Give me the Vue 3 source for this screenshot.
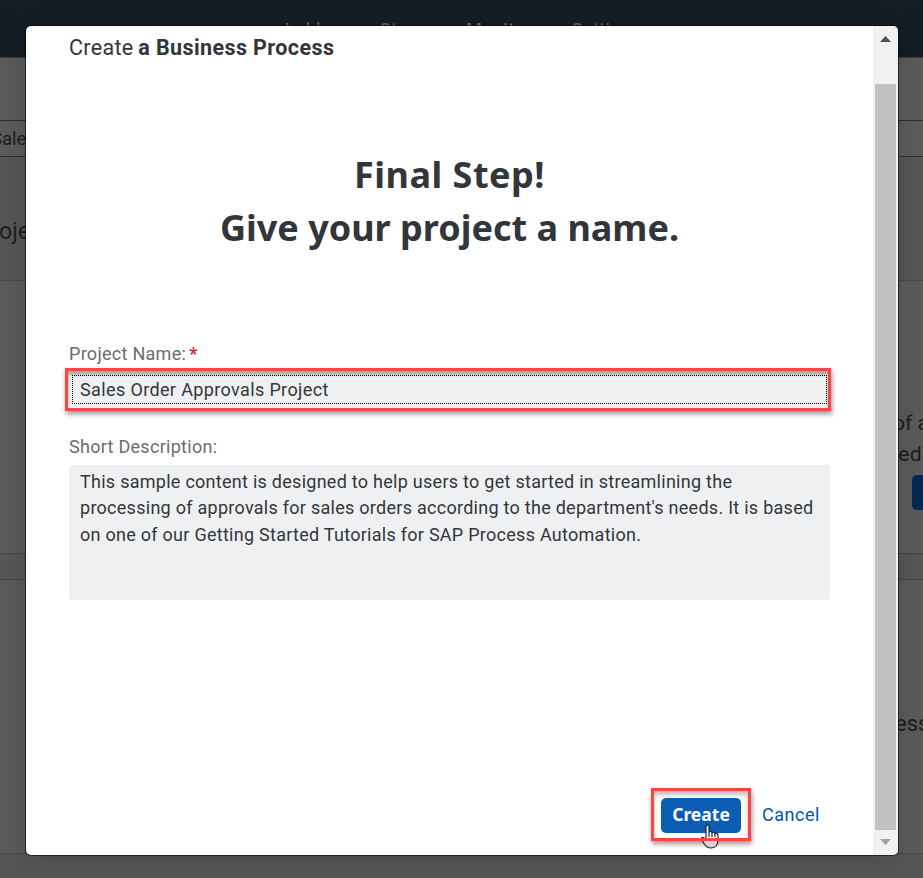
<script setup>
import { ref } from 'vue'

const navItems = [
  { label: 'Lobby', active: false },
  { label: 'Store', active: false },
  { label: 'Monitor', active: true },
  { label: 'Settings', active: false },
]
const projectName = ref('Sales Order Approvals Project')
const descriptionLines = [
  'This sample content is designed to help users to get started in streamlining the',
  "processing of approvals for sales orders according to the department's needs. It is based",
  'on one of our Getting Started Tutorials for SAP Process Automation.',
]
</script>

<template>
  <div class="screen">
    <div class="backdrop">
      <header class="topbar">
        <nav class="nav">
          <span v-for="item in navItems" :key="item.label" :class="{ active: item.active }">{{ item.label }}</span>
        </nav>
      </header>
      <section class="toolbar"></section>
      <section class="search"><span class="search-text">Sales</span></section>
      <section class="title-row"><span class="title-text">Projects</span></section>
      <section class="card card-top">
        <div class="card-body">
          <span>of a</span>
          <span class="second">ted</span>
          <span class="blue-button"></span>
        </div>
      </section>
      <section class="card card-bottom"><span class="ess">ess</span></section>
    </div>

    <main class="dialog">
      <div class="content">
        <h1 class="dialog-title">Create <b>a Business Process</b></h1>
        <h2 class="headline">
          <span class="h-first">Final Step!</span>
          <span class="h-second">Give your project a name.</span>
        </h2>
        <label class="label name-label">Project Name:<span class="star">*</span></label>
        <div class="input-frame">
          <div class="input"><span>{{ projectName }}</span></div>
        </div>
        <label class="label desc-label">Short Description:</label>
        <div class="textarea">
          <span v-for="(line, i) in descriptionLines" :key="i">{{ line }}</span>
        </div>
        <footer class="actions">
          <div class="create-frame">
            <button class="create">Create</button>
            <svg class="pointer" width="20" height="26" viewBox="0 0 20 26">
              <path d="M6 15V2.6C6 .5 9 .5 9 2.6V8.2C9.3 6.8 12 7.2 12 9C12.5 7.6 15 8.1 15 10C15.6 8.8 18 9.3 18 11.2V16C18 21 15 24 10.8 24C7 24 5.4 22 3.8 19.3L1.5 15.3C.7 13.8 2.8 12.7 4 14Z" fill="#fff" />
              <path d="M1.5 16H18C18 21 15 24 10.8 24C7 24 5.4 22 3.8 19.3Z" fill="#d4d4d4" />
              <path d="M6 15V2.6C6 .5 9 .5 9 2.6V8.2C9.3 6.8 12 7.2 12 9C12.5 7.6 15 8.1 15 10C15.6 8.8 18 9.3 18 11.2V16C18 21 15 24 10.8 24C7 24 5.4 22 3.8 19.3L1.5 15.3C.7 13.8 2.8 12.7 4 14Z" fill="none" stroke="#20242c" stroke-width="1.2" />
              <path d="M9 8v5M12 9v4M15 10v3" fill="none" stroke="#20242c" stroke-width="1.2" />
              <path d="M0 14H20V17H0Z" fill="#fc4444" />
            </svg>
          </div>
          <button class="cancel">Cancel</button>
        </footer>
      </div>
      <aside class="scrollbar">
        <svg class="arrow" width="11" height="6" viewBox="0 0 11 6"><path d="M0 6L5.5 0L11 6Z" fill="#505050" /></svg>
        <div class="thumb"></div>
        <svg class="arrow" width="11" height="6" viewBox="0 0 11 6"><path d="M0 0L5.5 6L11 0Z" fill="#a3a3a3" /></svg>
      </aside>
    </main>
  </div>
</template>

<style>
body { margin: 0; overflow: hidden; }
</style>

<style scoped>
* { box-sizing: border-box; }
.screen {
  position: relative;
  width: 923px;
  height: 878px;
  overflow: hidden;
  font-family: Roboto, "Noto Sans", sans-serif;
  color: #32363a;
}
.backdrop {
  display: flex;
  flex-direction: column;
  height: 878px;
  background: #565656;
  color: #1b1d1f;
}
.topbar {
  height: 58px;
  flex: none;
  background: linear-gradient(#151e26, #131c23);
  border-bottom: 1px solid #383c40;
}
.nav {
  display: grid;
  grid-template-columns: 95px 86px 106px 90px;
  padding: 19px 0 0 285px;
  font-size: 18px;
  line-height: 21px;
  letter-spacing: 0.4px;
  color: #686c6f;
}
.nav .active { font-weight: 500; }
.toolbar { height: 62px; flex: none; background: #5a5a5a; }
.search {
  display: flex;
  align-items: center;
  flex: none;
  height: 37px;
  border-top: 1px solid #2d3033;
  border-bottom: 1px solid #2d3033;
  background: #5b5b5b;
  font-size: 18.5px;
}
.search-text { margin-left: -9px; }
.title-row { flex: none; height: 123px; padding-top: 59px; font-size: 23px; line-height: 32px; }
.title-text { margin-left: -23px; }
.card { flex: none; background: #5a5a5a; border-top: 1px solid #484848; border-bottom: 1px solid #464646; }
.card-top { height: 274px; display: flex; justify-content: flex-end; padding-top: 127px; }
.card-body { display: flex; flex-direction: column; width: 30px; font-size: 21px; line-height: 31px; white-space: nowrap; }
.second { margin-left: -2px; letter-spacing: 0.4px; }
.blue-button { width: 30px; height: 35px; margin: 5px 0 0 19px; border-radius: 5px; background: #042850; }
.card-bottom { height: 275px; margin-top: 25px; display: flex; justify-content: flex-end; padding-top: 128px; font-size: 22px; line-height: 32px; }
.ess { width: 28px; }

.dialog {
  position: absolute;
  left: 26px;
  top: 26px;
  width: 872px;
  height: 829px;
  display: flex;
  overflow: hidden;
  border-radius: 5px;
  background: #fff;
  box-shadow: 0 0 0 1px rgba(0, 0, 0, 0.55), 0 4px 24px rgba(0, 0, 0, 0.16);
}
.content { width: 847px; height: 829px; padding: 0 43px; display: flex; flex-direction: column; white-space: nowrap; }
.dialog-title { margin: 8px 0 0; font-size: 21.5px; line-height: 27px; font-weight: 400; letter-spacing: 0.33px; }
.dialog-title b { margin-left: -1px; letter-spacing: 0.4px; }
.headline { display: flex; flex-direction: column; align-items: center; margin: 87px 0 0; font-family: "Noto Sans", sans-serif; font-size: 36px; line-height: 53px; font-weight: 700; }
.h-first { letter-spacing: 0.5px; }
.label { font-size: 18px; line-height: 24px; color: #6a6d70; letter-spacing: 0.28px; }
.name-label { margin-top: 88px; }
.star { margin-left: 3px; color: #c9302c; font-weight: 700; }
.input-frame {
  height: 43px;
  margin: 2px -1px 0 -4px;
  padding: 4px 1px 4px 4px;
  border: 3px solid #fc4444;
  background: #eff0f2;
  box-shadow: 1px 3px 5px rgba(0, 0, 0, 0.42), inset 0 4px 3px rgba(0, 0, 0, 0.28);
}
.input { height: 29px; border: 1px dotted #000; padding-left: 7px; font-size: 18px; line-height: 28px; letter-spacing: 0.37px; }
.desc-label { margin-top: 24px; }
.textarea { display: flex; flex-direction: column; height: 135px; margin-top: 6px; padding: 3.7px 11px; border-radius: 3px; background: #eff0f2; font-size: 18px; line-height: 26.5px; letter-spacing: 0.27px; }
.actions { display: flex; align-items: center; margin-top: 188px; height: 53px; justify-content: flex-end; }
.create-frame { position: relative; width: 100px; height: 53px; padding: 7px; border: 3px solid #fc4444; box-shadow: 1px 3px 5px rgba(0, 0, 0, 0.42), inset 0 4px 4px rgba(0, 0, 0, 0.25); }
button { font-family: inherit; border: 0; margin: 0; white-space: nowrap; }
.create { width: 80px; height: 35px; padding: 0 0 3px; border-radius: 5px; background: #0a5db2; color: #fff; font-family: "Noto Sans", sans-serif; font-size: 17.5px; line-height: 32px; font-weight: 700; display: block; }
.pointer { position: absolute; left: 46px; top: 33px; }
.cancel { width: 79px; height: 35px; padding: 0 0 0 1px; background: transparent; color: #0854a0; font-size: 18px; letter-spacing: 0.5px; text-align: center; }
.scrollbar { width: 25px; height: 829px; display: flex; flex-direction: column; align-items: center; background: #f1f1f1; padding: 10px 0 9px; }
.arrow { display: block; flex: none; }
.thumb { width: 21px; height: 746px; margin: 42px 0 9px; background: #c1c1c1; flex: none; }
</style>
